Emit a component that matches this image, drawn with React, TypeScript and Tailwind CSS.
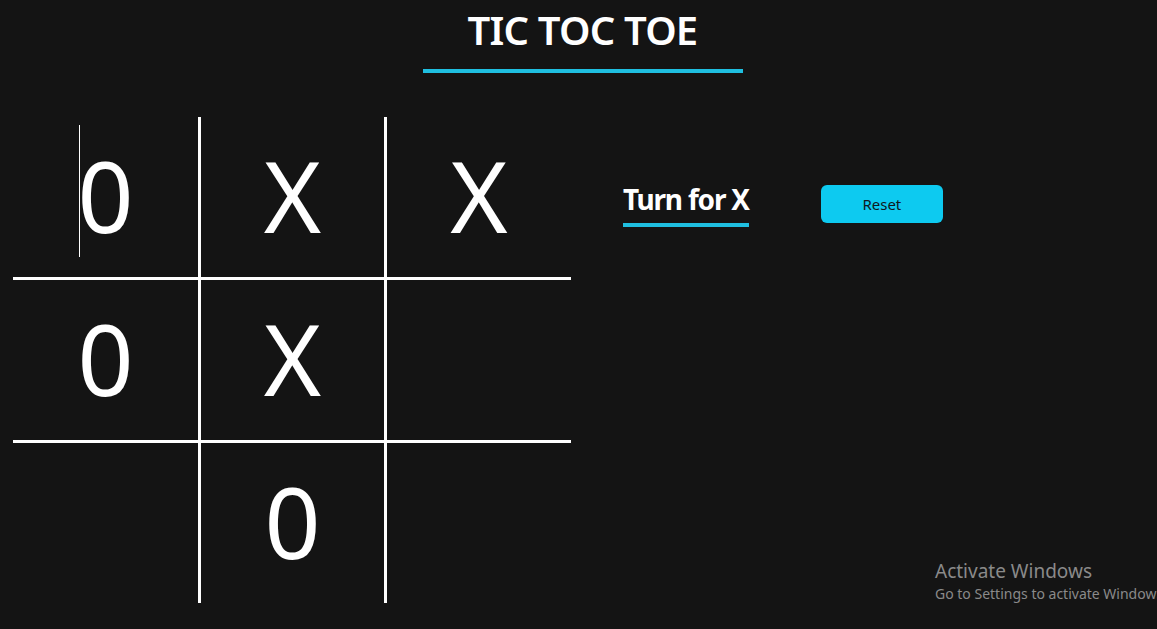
import { FC } from "react";

const board = ["0", "X", "X", "0", "X", "", "", "0", ""];

// borders for a 3x3 board: middle column gets side lines, top two rows get a bottom line
const cellClass = [
  "border-b-[3px]",
  "border-b-[3px] border-x-[3px]",
  "border-b-[3px]",
  "border-b-[3px]",
  "border-b-[3px] border-x-[3px]",
  "border-b-[3px]",
  "",
  "border-x-[3px]",
  "",
];

const App: FC = () => {
  return (
    <div className="relative min-h-screen h-[629px] overflow-hidden bg-[#141414] text-white font-['Noto_Sans',sans-serif]">
      {/* Title */}
      <header className="flex flex-col items-center pt-[10px] pl-[8px]">
        <h1 className="text-[40px] leading-none font-semibold tracking-[-0.8px]">TIC TOC TOE</h1>
        <div className="mt-[19px] h-[4px] w-[320px] bg-[#1fbfe0]"></div>
      </header>

      <main className="mt-[44px] flex items-start pl-[13px]">
        {/* Board */}
        <div className="grid grid-cols-[185px_189px_184px]">
          {board.map((v, i) => (
            <div
              key={i}
              className={`relative flex items-center justify-center border-white ${
                i < 6 ? "h-[163px]" : "h-[160px]"
              } ${cellClass[i]}`}
            >
              {i === 0 && <span className="absolute left-[66px] top-[8px] h-[132px] w-px bg-white"></span>}
              <span className="-mt-[4px] text-[98px] leading-none">{v}</span>
            </div>
          ))}
        </div>

        {/* Status + reset */}
        <div className="ml-[52px] flex items-start">
          <h3 className="mt-[68px] border-b-4 border-[#1fbfe0] pb-[10px] text-[28px] leading-none font-bold tracking-[-1.2px]">
            Turn for X
          </h3>
          <button className="ml-[72px] mt-[68px] h-[38px] w-[122px] rounded-[6px] bg-[#0dcaf0] text-[15px] text-[#101820]">
            Reset
          </button>
        </div>
      </main>

      {/* Windows watermark */}
      <div className="absolute left-[935px] top-[562px] whitespace-nowrap text-[#8a8a8a]">
        <p className="text-[19px] leading-none">Activate Windows</p>
        <p className="mt-[6px] text-[14px] leading-none">Go to Settings to activate Windows.</p>
      </div>
    </div>
  );
};

export default App;
